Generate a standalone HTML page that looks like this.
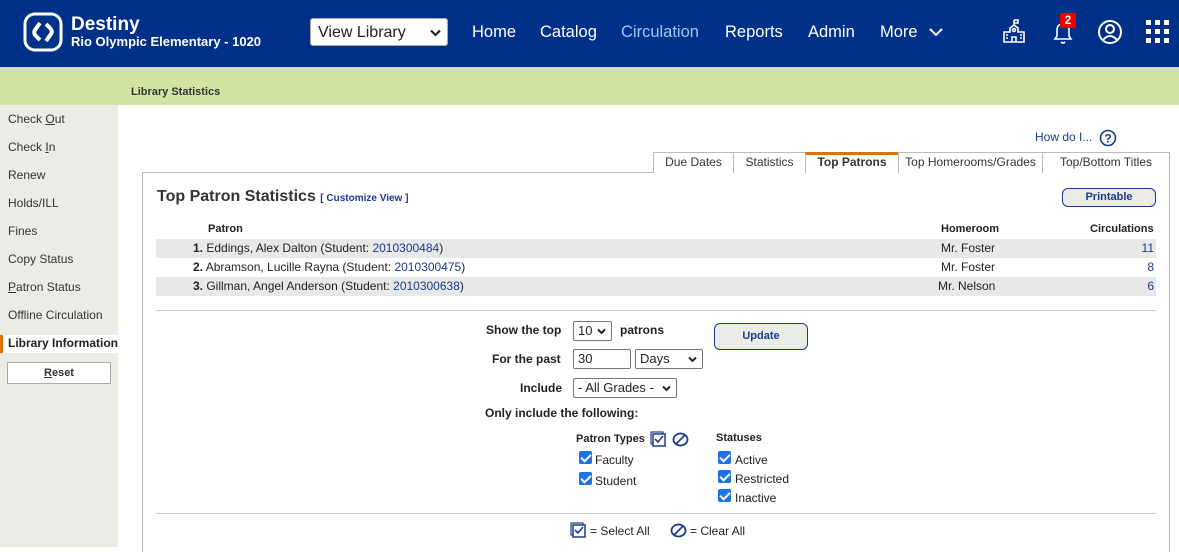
<!DOCTYPE html>
<html><head><style>
*{margin:0;padding:0;box-sizing:border-box}
body{width:1179px;height:547px;overflow:hidden;font-family:"Liberation Sans",Arial,sans-serif;background:#fff;position:relative;color:#222}
.a{position:absolute;white-space:nowrap}
.hdr{left:0;top:0;width:1179px;height:67px;background:#003087}
.nav{color:#fff;font-size:16.5px;top:23px}
.green{left:0;top:67px;width:1179px;height:38px;background:#d3e5a2}
.side{left:0;top:105px;width:118px;height:442px;background:#ecece6}
.si{left:8px;font-size:12px;color:#333}
.tab{top:152px;height:21px;border:1px solid #bbb;border-bottom:none;font-size:12px;text-align:center;line-height:18px;background:#fff;color:#333}
.lnk{color:#1b3a8c}
.row{left:156px;width:1000px;height:19px;font-size:12px;line-height:19px}
.g{background:#e8e8e8}
.lbl{font-size:12px;font-weight:bold;color:#222}
.sel{border:1px solid #777;border-radius:2px;background:#fff;font-size:13px;height:20px;line-height:18px;padding-left:4px}
.dn{position:absolute;right:5px;top:6px}
.cb{width:13px;height:13px;background:#1a73e8;border-radius:2px}
.cb:after{content:"";position:absolute;left:4px;top:1px;width:4px;height:8px;border:solid #fff;border-width:0 2px 2px 0;transform:rotate(45deg)}
.ct{font-size:12px;color:#222}
</style></head><body>
<div class="a hdr"></div>
<svg class="a" style="left:23px;top:12px" width="40" height="40" viewBox="0 0 40 40"><rect x="2" y="2" width="36" height="36" rx="10" fill="none" stroke="#fff" stroke-width="3"/><path d="M17 11 L12 18 Q10 21 13 24 L17 28" stroke="#fff" stroke-width="4" fill="none"/><path d="M23 12 L27 16 Q30 19 28 22 L23 29" stroke="#fff" stroke-width="4" fill="none"/></svg>
<div class="a" style="left:71px;top:14px;color:#fff;font-size:19px;font-weight:bold">Destiny</div>
<div class="a" style="left:71px;top:34px;color:#fff;font-size:13px;font-weight:bold">Rio Olympic Elementary - 1020</div>
<div class="a" style="left:310px;top:18px;width:138px;height:28px;background:#fff;border:1px solid #aaa;border-radius:3px;font-size:16px;line-height:27px;padding-left:7px;color:#222">View Library<svg style="position:absolute;right:6px;top:10px" width="11" height="8"><path d="M1 1.5 L5.5 6 L10 1.5" stroke="#222" stroke-width="2.2" fill="none"/></svg></div>
<div class="a nav" style="left:472px">Home</div>
<div class="a nav" style="left:540px">Catalog</div>
<div class="a nav" style="left:621px;color:#9ec6ff">Circulation</div>
<div class="a nav" style="left:725px">Reports</div>
<div class="a nav" style="left:808px">Admin</div>
<div class="a nav" style="left:880px">More</div>
<svg class="a" style="left:929px;top:27px" width="14" height="10"><path d="M1 2 L7 8 L13 2" stroke="#fff" stroke-width="2" fill="none"/></svg>
<svg class="a" style="left:1001px;top:18px" width="26" height="26" viewBox="0 0 26 26" fill="none" stroke="#fff" stroke-width="1.6"><path d="M13 2v6M13 2h4v3h-4"/><path d="M3 24V14h6v-4l4-3 4 3v4h6v10z"/><circle cx="13" cy="12" r="1.5"/><path d="M11 24v-5h4v5M5 17h2M5 20h2M19 17h2M19 20h2"/></svg>
<svg class="a" style="left:1051px;top:20px" width="24" height="26" viewBox="0 0 24 26" fill="none" stroke="#fff" stroke-width="1.6"><path d="M4 19 L6 16 V10 Q6 4 12 4 Q18 4 18 10 V16 L20 19 Z"/><path d="M10 22 Q12 24 14 22"/></svg>
<div class="a" style="left:1060px;top:13px;width:16px;height:15px;background:#e00;color:#fff;font-size:12px;font-weight:bold;text-align:center;line-height:15px;border-radius:2px">2</div>
<svg class="a" style="left:1097px;top:19px" width="26" height="26" viewBox="0 0 26 26" fill="none" stroke="#fff" stroke-width="2"><circle cx="13" cy="13" r="11"/><circle cx="13" cy="10" r="4"/><path d="M6 21 Q13 13 20 21"/></svg>
<svg class="a" style="left:1146px;top:20px" width="24" height="24" fill="#fff"><rect x="0" y="0" width="5" height="5"/><rect x="9" y="0" width="5" height="5"/><rect x="18" y="0" width="5" height="5"/><rect x="0" y="9" width="5" height="5"/><rect x="9" y="9" width="5" height="5"/><rect x="18" y="9" width="5" height="5"/><rect x="0" y="18" width="5" height="5"/><rect x="9" y="18" width="5" height="5"/><rect x="18" y="18" width="5" height="5"/></svg>
<div class="a green"></div>
<div class="a" style="left:131px;top:86px;font-size:11px;font-weight:bold;color:#333">Library Statistics</div>
<div class="a side"></div>
<div class="a si" style="top:112px">Check <u>O</u>ut</div>
<div class="a si" style="top:140px">Check <u>I</u>n</div>
<div class="a si" style="top:168px">Renew</div>
<div class="a si" style="top:196px">Holds/ILL</div>
<div class="a si" style="top:224px">Fines</div>
<div class="a si" style="top:252px">Copy Status</div>
<div class="a si" style="top:280px"><u>P</u>atron Status</div>
<div class="a si" style="top:308px">Offline Circulation</div>
<div class="a" style="left:0;top:335px;width:118px;height:18px;background:#fff;border-left:3px solid #e07000"></div>
<div class="a si" style="top:336px;font-weight:bold;color:#222">Library Information</div>
<div class="a" style="left:7px;top:362px;width:104px;height:22px;background:#fff;border:1px solid #aaa;font-size:11px;font-weight:bold;text-align:center;line-height:20px;color:#333"><u>R</u>eset</div>
<div class="a lnk" style="left:1035px;top:130px;font-size:12px">How do I...</div>
<svg class="a" style="left:1099px;top:129px" width="18" height="18"><circle cx="9" cy="9" r="7.5" stroke="#1b3a8c" stroke-width="1.6" fill="none"/><text x="9" y="13.5" font-size="12" font-weight="bold" text-anchor="middle" fill="#1b3a8c" font-family="Liberation Sans">?</text></svg>
<div class="a" style="left:142px;top:172px;width:1028px;height:380px;border:1px solid #bbb;border-bottom:none"></div>
<div class="a tab" style="left:653px;width:81px">Due Dates</div>
<div class="a tab" style="left:733px;width:73px">Statistics</div>
<div class="a tab" style="left:805px;width:94px;border-top:3px solid #e07000;line-height:15px;font-weight:bold;height:22px;border-bottom:1px solid #fff">Top Patrons</div>
<div class="a tab" style="left:898px;width:145px">Top Homerooms/Grades</div>
<div class="a tab" style="left:1042px;width:128px">Top/Bottom Titles</div>
<div class="a" style="left:157px;top:188px;font-size:16px;font-weight:bold;color:#333">Top Patron Statistics <span style="font-size:10px" class="lnk">[ Customize View ]</span></div>
<div class="a" style="left:1062px;top:188px;width:94px;height:19px;border:1px solid #1b3a8c;border-radius:6px;background:#ecece6;font-size:11px;font-weight:bold;text-align:center;line-height:17px;color:#1b3a8c">Printable</div>
<div class="a lbl" style="left:208px;top:223px;font-size:11px">Patron</div>
<div class="a lbl" style="left:941px;top:223px;font-size:11px">Homeroom</div>
<div class="a lbl" style="left:1090px;top:223px;font-size:11px">Circulations</div>
<div class="a row g" style="top:239px"><span class="a" style="left:37px"><b>1.</b> Eddings, Alex Dalton (Student: <span class="lnk">2010300484</span>)</span><span class="a" style="left:785px">Mr. Foster</span><span class="a lnk" style="right:2px">11</span></div>
<div class="a row" style="top:258px"><span class="a" style="left:37px"><b>2.</b> Abramson, Lucille Rayna (Student: <span class="lnk">2010300475</span>)</span><span class="a" style="left:785px">Mr. Foster</span><span class="a lnk" style="right:2px">8</span></div>
<div class="a row g" style="top:277px"><span class="a" style="left:37px"><b>3.</b> Gillman, Angel Anderson (Student: <span class="lnk">2010300638</span>)</span><span class="a" style="left:782px">Mr. Nelson</span><span class="a lnk" style="right:2px">6</span></div>
<div class="a" style="left:156px;top:310px;width:1000px;height:1px;background:#ccc"></div>
<div class="a lbl" style="left:486px;top:323px">Show the top</div>
<div class="a sel" style="left:573px;top:321px;width:39px">10<svg class="dn" width="9" height="7"><path d="M1 1.5 L4.5 5 L8 1.5" stroke="#222" stroke-width="2" fill="none"/></svg></div>
<div class="a lbl" style="left:620px;top:323px">patrons</div>
<div class="a" style="left:714px;top:323px;width:94px;height:27px;border:1px solid #1b3a8c;border-radius:6px;background:#ecece6;font-size:11px;font-weight:bold;text-align:center;line-height:25px;color:#1b3a8c">Update</div>
<div class="a lbl" style="left:492px;top:352px">For the past</div>
<div class="a sel" style="left:573px;top:349px;width:58px">30</div>
<div class="a sel" style="left:635px;top:349px;width:68px">Days<svg class="dn" width="9" height="7"><path d="M1 1.5 L4.5 5 L8 1.5" stroke="#222" stroke-width="2" fill="none"/></svg></div>
<div class="a lbl" style="left:520px;top:381px">Include</div>
<div class="a sel" style="left:573px;top:378px;width:104px">- All Grades -<svg class="dn" width="9" height="7"><path d="M1 1.5 L4.5 5 L8 1.5" stroke="#222" stroke-width="2" fill="none"/></svg></div>
<div class="a lbl" style="left:485px;top:406px">Only include the following:</div>
<div class="a lbl" style="left:576px;top:433px;font-size:11px">Patron Types</div>
<svg class="a" style="left:650px;top:431px" width="16" height="16"><rect x="1" y="1" width="12" height="12" fill="none" stroke="#1b3a8c" stroke-width="1.2"/><rect x="3" y="3" width="12" height="12" fill="#fff" stroke="#1b3a8c" stroke-width="1.5"/><path d="M5 8 L8 11 L13 5" stroke="#1b3a8c" stroke-width="1.6" fill="none"/></svg>
<svg class="a" style="left:672px;top:432px" width="17" height="15"><ellipse cx="8.5" cy="7.5" rx="7" ry="6" fill="none" stroke="#1b3a8c" stroke-width="1.8"/><path d="M4 12 L13 3" stroke="#1b3a8c" stroke-width="1.8"/></svg>
<div class="a lbl" style="left:716px;top:432px;font-size:11px">Statuses</div>
<div class="a cb" style="left:579px;top:451px"></div><div class="a ct" style="left:595px;top:453px">Faculty</div>
<div class="a cb" style="left:579px;top:472px"></div><div class="a ct" style="left:595px;top:474px">Student</div>
<div class="a cb" style="left:718px;top:451px"></div><div class="a ct" style="left:735px;top:453px">Active</div>
<div class="a cb" style="left:718px;top:470px"></div><div class="a ct" style="left:735px;top:472px">Restricted</div>
<div class="a cb" style="left:718px;top:489px"></div><div class="a ct" style="left:735px;top:491px">Inactive</div>
<div class="a" style="left:156px;top:513px;width:1000px;height:1px;background:#ccc"></div>
<svg class="a" style="left:570px;top:522px" width="16" height="16"><rect x="1" y="1" width="12" height="12" fill="none" stroke="#1b3a8c" stroke-width="1.2"/><rect x="3" y="3" width="12" height="12" fill="#fff" stroke="#1b3a8c" stroke-width="1.5"/><path d="M5 8 L8 11 L13 5" stroke="#1b3a8c" stroke-width="1.6" fill="none"/></svg>
<div class="a ct" style="left:590px;top:524px">= Select All</div>
<svg class="a" style="left:670px;top:523px" width="17" height="15"><ellipse cx="8.5" cy="7.5" rx="7" ry="6" fill="none" stroke="#1b3a8c" stroke-width="1.8"/><path d="M4 12 L13 3" stroke="#1b3a8c" stroke-width="1.8"/></svg>
<div class="a ct" style="left:690px;top:524px">= Clear All</div>
</body></html>
